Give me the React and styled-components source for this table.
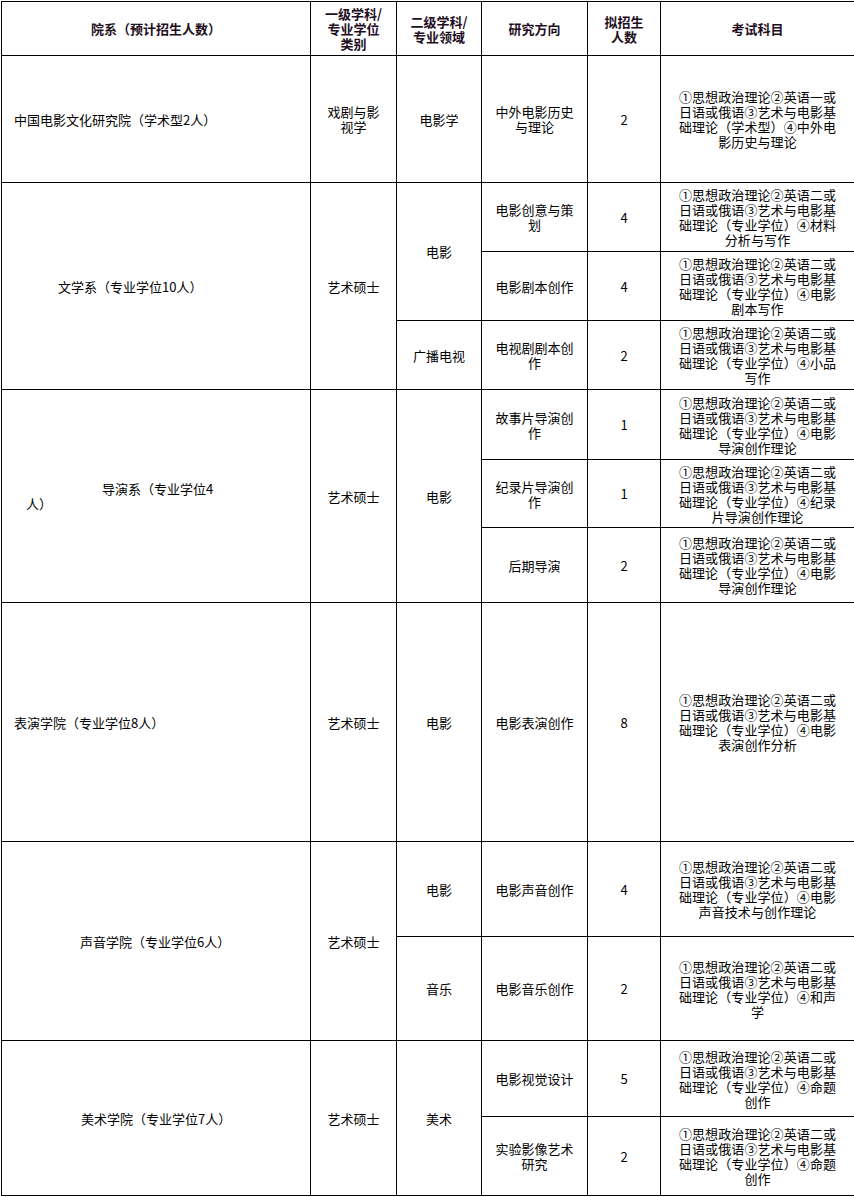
import React from "react";
import styled, { createGlobalStyle } from "styled-components";

const GlobalStyle = createGlobalStyle`
    body {
        margin: 0;
        background: #fff;
        font-family: "Noto Sans CJK SC", "Noto Sans", sans-serif;
        color: #000;
    }
`;

// the source wraps the exam text every 12 characters
const exam = (last, first = "英语二或") => {
    const text = `①思想政治理论②${first}日语或俄语③艺术与电影基础理论（${
        first === "英语一或" ? "学术型" : "专业学位"
    }）④${last}`;
    const chars = Array.from(text);
    const lines = [];
    for (let i = 0; i < chars.length; i += 12) {
        lines.push(chars.slice(i, i + 12).join(""));
    }
    return lines;
};

const colWidths = [309, 86, 85, 106, 73, 194];

// heights between grid lines, measured from the picture
const rowHeights = [127, 69, 69, 69, 70, 68, 75, 239, 95, 104, 76, 79];

const rows = [
    {
        dept: { text: "中国电影文化研究院（学术型2人）", span: 1, pad: 12 },
        first: { text: "戏剧与影视学", span: 1 },
        second: { text: "电影学", span: 1 },
        dir: "中外电影历史与理论",
        num: 2,
        exam: exam("中外电影历史与理论", "英语一或"),
    },
    {
        dept: { text: "文学系（专业学位10人）", span: 3, pad: 56 },
        first: { text: "艺术硕士", span: 3 },
        second: { text: "电影", span: 2 },
        dir: "电影创意与策划",
        num: 4,
        exam: exam("材料分析与写作"),
    },
    { dir: "电影剧本创作", num: 4, exam: exam("电影剧本写作") },
    {
        second: { text: "广播电视", span: 1 },
        dir: "电视剧剧本创作",
        num: 2,
        exam: exam("小品写作"),
    },
    {
        dept: { text: "导演系（专业学位4", tail: "人）", span: 3, pad: 24, indent: 76 },
        first: { text: "艺术硕士", span: 3 },
        second: { text: "电影", span: 3 },
        dir: "故事片导演创作",
        num: 1,
        exam: exam("电影导演创作理论"),
    },
    { dir: "纪录片导演创作", num: 1, exam: exam("纪录片导演创作理论") },
    { dir: "后期导演", num: 2, exam: exam("电影导演创作理论") },
    {
        dept: { text: "表演学院（专业学位8人）", span: 1, pad: 12 },
        first: { text: "艺术硕士", span: 1 },
        second: { text: "电影", span: 1 },
        dir: "电影表演创作",
        num: 8,
        exam: exam("电影表演创作分析"),
    },
    {
        dept: { text: "声音学院（专业学位6人）", span: 2, pad: 78 },
        first: { text: "艺术硕士", span: 2 },
        second: { text: "电影", span: 1 },
        dir: "电影声音创作",
        num: 4,
        exam: exam("电影声音技术与创作理论"),
    },
    {
        second: { text: "音乐", span: 1 },
        dir: "电影音乐创作",
        num: 2,
        exam: exam("和声学"),
    },
    {
        dept: { text: "美术学院（专业学位7人）", span: 2, pad: 79 },
        first: { text: "艺术硕士", span: 2 },
        second: { text: "美术", span: 2 },
        dir: "电影视觉设计",
        num: 5,
        exam: exam("命题创作"),
    },
    { dir: "实验影像艺术研究", num: 2, exam: exam("命题创作") },
];

export default function App() {
    return (
        <>
            <GlobalStyle />
            <Table>
                <colgroup>
                    {colWidths.map((w, i) => (
                        <col key={i} style={{ width: w }} />
                    ))}
                </colgroup>
                <thead>
                    <Row $h={54}>
                        <Head>院系（预计招生人数）</Head>
                        <Head>
                            一级学科/
                            <br />
                            专业学位
                            <br />
                            类别
                        </Head>
                        <Head>
                            二级学科/
                            <br />
                            专业领域
                        </Head>
                        <Head>研究方向</Head>
                        <Head>
                            拟招生
                            <br />
                            人数
                        </Head>
                        <Head>考试科目</Head>
                    </Row>
                </thead>
                <tbody>
                    {rows.map((r, i) => (
                        <Row key={i} $h={rowHeights[i]}>
                            {r.dept && (
                                <DeptCell
                                    rowSpan={r.dept.span}
                                    $pad={r.dept.pad}
                                    $indent={r.dept.indent || 0}
                                >
                                    {r.dept.text}
                                    {r.dept.tail && (
                                        <>
                                            <br />
                                            {r.dept.tail}
                                        </>
                                    )}
                                </DeptCell>
                            )}
                            {r.first && (
                                <NarrowCell rowSpan={r.first.span}>
                                    {r.first.text}
                                </NarrowCell>
                            )}
                            {r.second && (
                                <NarrowCell rowSpan={r.second.span}>
                                    {r.second.text}
                                </NarrowCell>
                            )}
                            <DirCell>{r.dir}</DirCell>
                            <NumCell>{r.num}</NumCell>
                            <ExamCell>
                                {r.exam.map((line, j) => (
                                    <React.Fragment key={j}>
                                        {j > 0 && <br />}
                                        {line}
                                    </React.Fragment>
                                ))}
                            </ExamCell>
                        </Row>
                    ))}
                </tbody>
            </Table>
        </>
    );
}

const Table = styled("table")`
    border-collapse: collapse;
    table-layout: fixed;
    width: 853px;
    margin: 1px 0 0 1px;
    font-size: 13px;
    line-height: 15px;
`;

const Row = styled("tr")`
    height: ${(props) => props.$h}px;
`;

const Cell = styled("td")`
    border: 1px solid #000;
    padding: 0;
    vertical-align: middle;
    text-align: center;
    word-break: break-all;
    color: #000;
`;

const Head = styled(Cell).attrs({ as: "th" })`
    font-weight: bold;
    line-height: 15px;
    color: #1e0e1e;
`;

const DeptCell = styled(Cell)`
    text-align: left;
    padding-left: ${(props) => props.$pad}px;
    text-indent: ${(props) => props.$indent}px;
`;

const NarrowCell = styled(Cell)`
    padding: 0 13px;
`;

const DirCell = styled(Cell)`
    padding: 0 10px;
`;

const NumCell = styled(Cell)``;

const ExamCell = styled(Cell)`
    padding: 0 8px;
    letter-spacing: 0.1px;
    white-space: nowrap;
`;
